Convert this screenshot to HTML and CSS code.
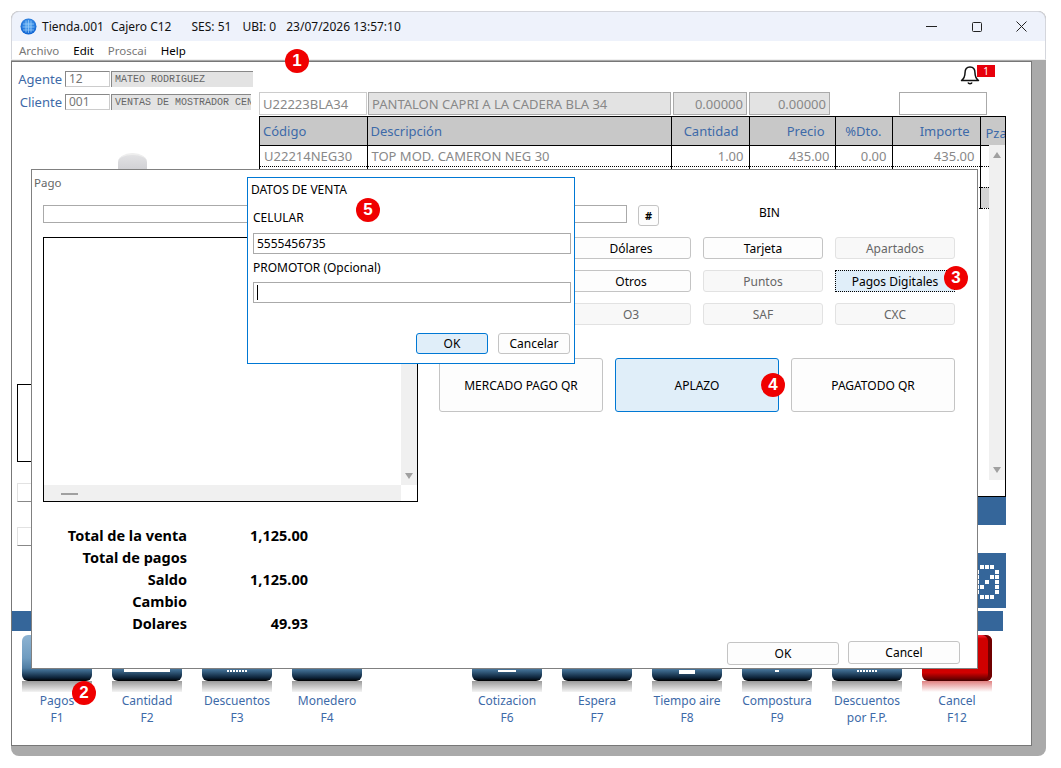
FILE: index.html
```html
<!DOCTYPE html>
<html lang="es">
<head>
    <meta charset="UTF-8">
    <meta name="viewport" content="width=device-width, initial-scale=1.0">
    <title>Tienda.001</title>
    <link rel="stylesheet" href="styles.css">
</head>
<body>
    <div class="window">
        <div class="titlebar">
            <svg class="globe" width="17" height="17" viewBox="0 0 17 17">
                <defs>
                    <radialGradient id="globe-fill" cx="0.5" cy="0.4" r="0.6">
                        <stop offset="0" stop-color="#5fb0f5"/>
                        <stop offset="1" stop-color="#0a5fd0"/>
                    </radialGradient>
                </defs>
                <circle cx="8.5" cy="8.5" r="8" fill="url(#globe-fill)"/>
                <path d="M3 6h11M2.500 9h12M3 12h11M6 2.500v12M8.500 2v13M11 2.500v12" stroke="#9fd0fa" stroke-width="0.7" fill="none"/>
            </svg>
            <span class="title-part">Tienda.001</span>
            <span class="title-part title-cajero">Cajero C12</span>
            <span class="title-part title-ses">SES: 51</span>
            <span class="title-part title-ubi">UBI: 0</span>
            <span class="title-part title-date">23/07/2026 13:57:10</span>
            <div class="win-controls">
                <svg width="11" height="11" viewBox="0 0 11 11"><path d="M0 5.500h11" stroke="#222" fill="none"/></svg>
                <svg width="11" height="11" viewBox="0 0 11 11"><rect x="1.500" y="1.500" width="9" height="9" rx="1" stroke="#222" fill="none"/></svg>
                <svg width="11" height="11" viewBox="0 0 11 11"><path d="M0.500 0.500l10 10M10.500 0.500l-10 10" stroke="#222" fill="none"/></svg>
            </div>
        </div>
        <div class="menubar">
            <span class="menu-off">Archivo</span>
            <span>Edit</span>
            <span class="menu-off">Proscai</span>
            <span>Help</span>
        </div>

        <div class="client">
            <div class="upper">
                <div class="left-col">
                    <div class="agent-row">
                        <label class="agent-label">Agente</label>
                        <div class="field-code">12</div>
                        <div class="field-name">MATEO RODRIGUEZ</div>
                    </div>
                    <div class="agent-row agent-row-second">
                        <label class="agent-label">Cliente</label>
                        <div class="field-code">001</div>
                        <div class="field-name field-name-short">VENTAS DE MOSTRADOR CEN</div>
                    </div>
                    <div class="cylinder"></div>
                    <div class="side-box"></div>
                    <div class="side-input side-input-first"></div>
                    <div class="side-input side-input-second"></div>
                </div>

                <div class="right-col">
                    <div class="bell-row">
                        <div class="bell">
                            <svg width="20" height="21" viewBox="0 0 20 21">
                                <path d="M10 2c-3.500 0-5 2.800-5 6 0 3.500-1 5.500-3.500 7.500h17C16 13.500 15 11.500 15 8c0-3.200-1.500-6-5-6zM8 17.500c.5 1.500 3.500 1.500 4 0" fill="none" stroke="#111" stroke-width="1.500" stroke-linejoin="round"/>
                            </svg>
                            <span class="bell-count">1</span>
                        </div>
                    </div>
                    <div class="product-row">
                        <div class="prod-field prod-code">U22223BLA34</div>
                        <div class="prod-field prod-off prod-desc">PANTALON CAPRI A LA CADERA BLA 34</div>
                        <div class="prod-field prod-off prod-num">0.00000</div>
                        <div class="prod-field prod-off prod-num prod-num-wide">0.00000</div>
                        <div class="prod-field prod-blank"></div>
                    </div>
                    <div class="grid-wrap">
                        <table class="grid">
                            <colgroup>
                                <col class="c-code"><col class="c-desc"><col class="c-qty"><col class="c-price">
                                <col class="c-disc"><col class="c-total"><col class="c-pza">
                            </colgroup>
                            <thead>
                                <tr>
                                    <th class="left">Código</th>
                                    <th class="left">Descripción</th>
                                    <th>Cantidad</th>
                                    <th>Precio</th>
                                    <th>%Dto.</th>
                                    <th>Importe</th>
                                    <th class="left pza">Pza</th>
                                </tr>
                            </thead>
                            <tbody>
                                <tr>
                                    <td class="left">U22214NEG30</td>
                                    <td class="left">TOP MOD. CAMERON NEG 30</td>
                                    <td>1.00</td>
                                    <td>435.00</td>
                                    <td>0.00</td>
                                    <td>435.00</td>
                                    <td class="no-dots"></td>
                                </tr>
                                <tr><td></td><td></td><td></td><td></td><td></td><td></td><td class="short-dots"></td></tr>
                                <tr><td></td><td></td><td></td><td></td><td></td><td></td><td class="row-pick short-dots"></td></tr>
                            </tbody>
                        </table>
                        <div class="vscroll">
                            <span class="arrow-up"></span>
                            <span class="arrow-down"></span>
                        </div>
                    </div>
                    <div class="blue-bar"></div>
                    <div class="blue-display">
                        <svg class="dots" width="25" height="35" viewBox="0 0 25 35" fill="#fff">
                            <rect x="5" y="0" width="4" height="4"/><rect x="10" y="0" width="4" height="4"/><rect x="15" y="0" width="4" height="4"/>
                            <rect x="0" y="5" width="4" height="4"/><rect x="20" y="5" width="4" height="4"/>
                            <rect x="0" y="10" width="4" height="4"/><rect x="15" y="10" width="4" height="4"/><rect x="20" y="10" width="4" height="4"/>
                            <rect x="0" y="15" width="4" height="4"/><rect x="10" y="15" width="4" height="4"/><rect x="20" y="15" width="4" height="4"/>
                            <rect x="0" y="20" width="4" height="4"/><rect x="5" y="20" width="4" height="4"/><rect x="20" y="20" width="4" height="4"/>
                            <rect x="0" y="25" width="4" height="4"/><rect x="20" y="25" width="4" height="4"/>
                            <rect x="5" y="30" width="4" height="4"/><rect x="10" y="30" width="4" height="4"/><rect x="15" y="30" width="4" height="4"/>
                        </svg>
                    </div>
                </div>
            </div>

            <div class="status-bar"></div>

            <div class="keys">
                <div class="key"><div class="cap"></div><div class="shine"></div><div class="key-label">Pagos<br>F1</div></div>
                <div class="key"><div class="cap"><i class="peek peek-bar"></i></div><div class="shine"></div><div class="key-label">Cantidad<br>F2</div></div>
                <div class="key"><div class="cap"><i class="peek peek-dots"></i></div><div class="shine"></div><div class="key-label">Descuentos<br>F3</div></div>
                <div class="key"><div class="cap"></div><div class="shine"></div><div class="key-label">Monedero<br>F4</div></div>
                <div class="key key-empty"></div>
                <div class="key"><div class="cap"><i class="peek peek-small"></i></div><div class="shine"></div><div class="key-label">Cotizacion<br>F6</div></div>
                <div class="key"><div class="cap"></div><div class="shine"></div><div class="key-label">Espera<br>F7</div></div>
                <div class="key"><div class="cap"><i class="peek peek-blob"></i></div><div class="shine"></div><div class="key-label">Tiempo aire<br>F8</div></div>
                <div class="key"><div class="cap"><i class="peek peek-dot"></i></div><div class="shine"></div><div class="key-label">Compostura<br>F9</div></div>
                <div class="key"><div class="cap"><i class="peek peek-dots"></i></div><div class="shine"></div><div class="key-label">Descuentos<br>por F.P.</div></div>
                <div class="key key-red"><div class="cap"></div><div class="shine"></div><div class="key-label">Cancel<br>F12</div></div>
            </div>

            <div class="pago">
                <div class="pago-title">Pago</div>
                <div class="pago-search">
                    <div class="search-input"></div>
                    <button class="btn btn-hash">#</button>
                    <span class="bin">BIN</span>
                </div>
                <div class="pago-body">
                    <div class="pago-left">
                        <div class="listbox">
                            <div class="list-v"><span class="arrow-down"></span></div>
                            <div class="list-h"><span class="list-thumb"></span></div>
                        </div>
                        <div class="totals">
                            <span>Total de la venta</span><span>1,125.00</span>
                            <span>Total de pagos</span><span></span>
                            <span>Saldo</span><span>1,125.00</span>
                            <span>Cambio</span><span></span>
                            <span>Dolares</span><span>49.93</span>
                        </div>
                    </div>
                    <div class="pago-right">
                        <div class="methods">
                            <button class="btn"></button>
                            <button class="btn">Dólares</button>
                            <button class="btn">Tarjeta</button>
                            <button class="btn btn-off">Apartados</button>
                            <button class="btn"></button>
                            <button class="btn">Otros</button>
                            <button class="btn btn-off">Puntos</button>
                            <button class="btn btn-focus">Pagos Digitales</button>
                            <button class="btn btn-off"></button>
                            <button class="btn btn-off">O3</button>
                            <button class="btn btn-off">SAF</button>
                            <button class="btn btn-off">CXC</button>
                        </div>
                        <div class="providers">
                            <button class="btn btn-big">MERCADO PAGO QR</button>
                            <button class="btn btn-big btn-active">APLAZO</button>
                            <button class="btn btn-big">PAGATODO QR</button>
                        </div>
                    </div>
                </div>
                <div class="pago-footer">
                    <button class="btn btn-foot btn-foot-ok">OK</button>
                    <button class="btn btn-foot">Cancel</button>
                </div>
            </div>

            <div class="datos">
                <div class="datos-title">DATOS DE VENTA</div>
                <div class="datos-label datos-label-cel">CELULAR</div>
                <div class="datos-input">5555456735</div>
                <div class="datos-label datos-label-promo">PROMOTOR (Opcional)</div>
                <div class="datos-input"><span class="caret"></span></div>
                <div class="datos-footer">
                    <button class="btn btn-dlg btn-active">OK</button>
                    <button class="btn btn-dlg">Cancelar</button>
                </div>
            </div>

            <span class="callout callout-1">1</span>
            <span class="callout callout-2">2</span>
            <span class="callout callout-3">3</span>
            <span class="callout callout-4">4</span>
            <span class="callout callout-5">5</span>
        </div>
    </div>
</body>
</html>
```

FILE: styles.css
```css
* {
    box-sizing: border-box;
}

body {
    margin: 0;
    padding: 11px 15px 0 11px;
    background-color: #fff;
    font-family: "Noto Sans", Arial, sans-serif;
    font-size: 12px;
    color: #000;
}

.window {
    width: 1035px;
    height: 745px;
    background-color: #aaa;
    border-radius: 8px;
    overflow: hidden;
}

/* title bar */
.titlebar {
    height: 30px;
    display: flex;
    align-items: center;
    padding-left: 8px;
    background-color: #eef2fb;
    border: 1px solid #d4d6dc;
    border-bottom: none;
    border-radius: 8px 8px 0 0;
    font-size: 12px;
    color: #111;
}

.globe {
    margin-right: 5px;
}

.title-cajero {
    margin-left: 7px;
}

.title-ses {
    margin-left: 20px;
}

.title-ubi {
    margin-left: 11px;
}

.title-date {
    margin-left: 10px;
}

.win-controls {
    margin-left: auto;
    display: flex;
    gap: 34px;
    padding-right: 18px;
}

.menubar {
    height: 19px;
    display: flex;
    align-items: center;
    gap: 14px;
    padding-left: 7px;
    background-color: #fff;
    border-left: 1px solid #d4d6dc;
    border-right: 1px solid #d4d6dc;
    border-bottom: 1px solid #f0f0f0;
    font-size: 11.500px;
}

.menu-off {
    color: #777;
}

/* main form */
.client {
    position: relative;
    width: 1021px;
    height: 685px;
    margin-top: 1px;
    background-color: #fff;
    border: 1px solid #777;
}

.upper {
    display: flex;
    height: 549px;
}

.left-col {
    width: 247px;
    padding-top: 9px;
}

.agent-row {
    display: flex;
    align-items: center;
    height: 16px;
}

.agent-row-second {
    margin-top: 7px;
}

.agent-label {
    width: 50px;
    text-align: right;
    margin-right: 3px;
    font-size: 13px;
    color: #3d6aa8;
}

.field-code {
    width: 45px;
    height: 16px;
    padding-left: 3px;
    border: 1px solid #ccc;
    border-top-color: #888;
    border-left-color: #888;
    font-size: 12px;
    line-height: 14px;
    color: #777;
}

.field-name {
    width: 142px;
    height: 16px;
    margin-left: 1px;
    padding-left: 3px;
    overflow: hidden;
    white-space: nowrap;
    background-color: #e3e3e3;
    border-top: 1px solid #888;
    border-left: 1px solid #888;
    font-family: "Liberation Mono", monospace;
    font-size: 10px;
    line-height: 15px;
    color: #666;
}

.field-name-short {
    width: 140px;
}

.cylinder {
    width: 29px;
    height: 18px;
    margin: 43px 0 0 106px;
    background: linear-gradient(#e2e2e4, #cfcfd3);
    border-radius: 14px 14px 0 0 / 9px 9px 0 0;
    border-top: 2px solid #eee;
}

.side-box {
    width: 200px;
    height: 78px;
    margin: 213px 0 0 5px;
    border: 1px solid #000;
}

.side-input {
    width: 200px;
    height: 19px;
    margin-left: 5px;
    border: 1px solid #e2e2e2;
    border-bottom: 1px solid #888;
}

.side-input-first {
    margin-top: 21px;
}

.side-input-second {
    margin-top: 25px;
}

.right-col {
    width: 747px;
}

.bell-row {
    height: 30px;
    padding: 3px 0 0 701px;
}

.bell {
    position: relative;
    width: 20px;
}

.bell-count {
    position: absolute;
    left: 17px;
    top: 0;
    width: 18px;
    height: 12px;
    background-color: #e8000b;
    color: #fff;
    font-size: 10px;
    line-height: 12px;
    text-align: center;
}

.product-row {
    display: flex;
    height: 23px;
}

.prod-field {
    height: 23px;
    padding: 0 3px;
    border: 1px solid #aaa;
    font-size: 13px;
    line-height: 23px;
    color: #888;
    white-space: nowrap;
}

.prod-code {
    width: 108px;
    border-color: #ccc;
}

.prod-off {
    background-color: #e3e3e3;
}

.prod-desc {
    width: 303px;
    margin-left: 1px;
}

.prod-num {
    width: 74px;
    margin-left: 2px;
    text-align: right;
}

.prod-num-wide {
    width: 81px;
}

.prod-blank {
    width: 88px;
    margin-left: 69px;
}

.grid-wrap {
    position: relative;
    height: 381px;
    margin-top: 1px;
    border: 1px solid #000;
    border-right-width: 1px;
}

.grid {
    width: 745px;
    table-layout: fixed;
    border-collapse: collapse;
}

.c-code { width: 107px; }
.c-desc { width: 304px; }
.c-qty { width: 78px; }
.c-price { width: 86px; }
.c-disc { width: 57px; }
.c-total { width: 88px; }
.c-pza { width: 25px; }

.grid th {
    height: 28px;
    padding: 0 10px 0 3px;
    background-color: #c8c8c8;
    border-left: 1px solid #000;
    border-bottom: 1px solid #000;
    font-size: 13px;
    font-weight: normal;
    text-align: right;
    color: #3d6aa8;
}

.grid th:first-child,
.grid td:first-child {
    border-left: none;
}

.grid td {
    height: 21px;
    padding: 0 5px 0 4px;
    border-left: 1px solid #000;
    border-bottom: 1px dotted #000;
    font-size: 13px;
    text-align: right;
    color: #888;
}

.grid .left {
    text-align: left;
}

.grid .pza {
    padding: 4px 0 0 5px;
    overflow: hidden;
    white-space: nowrap;
}

.grid .no-dots {
    border-bottom: 1px dotted #000;
}

.row-pick {
    background-image: linear-gradient(to right, #d4d4d4 9px, #fff 9px);
}

.vscroll {
    position: absolute;
    right: 0;
    top: 28px;
    width: 16px;
    height: 335px;
    display: flex;
    flex-direction: column;
    justify-content: space-between;
    align-items: center;
    padding: 7px 0;
    background-color: #f0f0f0;
}

.arrow-up {
    width: 0;
    height: 0;
    border-left: 4px solid transparent;
    border-right: 4px solid transparent;
    border-bottom: 6px solid #a0a0a0;
}

.arrow-down {
    width: 0;
    height: 0;
    border-left: 4px solid transparent;
    border-right: 4px solid transparent;
    border-top: 6px solid #a0a0a0;
}

.blue-bar {
    height: 28px;
    background-color: #35669a;
}

.blue-display {
    width: 747px;
    height: 55px;
    margin-top: 28px;
    padding: 12px 0 0 716px;
    background-color: #35669a;
}

.dots {
    display: block;
}

.status-bar {
    width: 991px;
    height: 20px;
    margin-top: 0;
    background-color: #35669a;
}

/* function keys */
.keys {
    display: flex;
    gap: 20px;
    padding: 4px 0 0 10px;
}

.key {
    width: 70px;
}

.cap {
    height: 46px;
    display: flex;
    justify-content: center;
    align-items: flex-end;
    padding-bottom: 9px;
    border-radius: 6px;
    background: linear-gradient(#8db3d2 0, #6f9cc0 50%, #4f7da3 72%, #3a6588 78%, #0c2238 93%, #000 100%);
}

.shine {
    height: 11px;
    background: linear-gradient(#9a9a9a, #f4f4f4);
}

.key-label {
    width: 90px;
    margin-left: -10px;
    font-size: 12px;
    line-height: 17px;
    text-align: center;
    color: #3d6aa8;
}

.key-red .cap {
    background: linear-gradient(#ff3040 0, #d00000 8%, #d00000 82%, #700000 95%, #400000 100%);
    box-shadow: inset -4px 0 0 #700000;
}

.key-red .shine {
    background: linear-gradient(#e08080, #fff);
}

.peek {
    display: block;
    background-color: #fff;
}

.peek-bar {
    width: 46px;
    height: 3px;
}

.peek-small {
    width: 18px;
    height: 2px;
}

.peek-blob {
    width: 16px;
    height: 4px;
    margin-bottom: -2px;
}

.peek-dot {
    width: 4px;
    height: 2px;
}

.peek-dots {
    width: 20px;
    height: 2px;
    background: repeating-linear-gradient(to right, #fff 0 2px, transparent 2px 3px);
}

/* pago dialog */
.pago {
    position: absolute;
    left: 19px;
    top: 107px;
    width: 947px;
    height: 500px;
    display: flex;
    flex-direction: column;
    background-color: #fff;
    border: 1px solid #808080;
}

.pago-title {
    padding: 5px 0 0 2px;
    height: 35px;
    font-size: 11.500px;
    color: #666;
}

.pago-search {
    display: flex;
    align-items: flex-start;
    padding-left: 11px;
}

.search-input {
    width: 584px;
    height: 18px;
    border: 1px solid #aaa;
}

.btn {
    display: block;
    padding: 0;
    background-color: #fdfdfd;
    border: 1px solid #c4c4c4;
    border-radius: 3px;
    font-family: "Noto Sans", Arial, sans-serif;
    font-size: 12px;
    color: #000;
}

.btn-hash {
    width: 21px;
    height: 21px;
    margin-left: 11px;
    font-weight: bold;
    font-size: 11px;
}

.bin {
    margin: -1px 0 0 100px;
    line-height: 17px;
}

.pago-body {
    display: flex;
    margin-top: 11px;
}

.pago-left {
    width: 375px;
    margin-left: 11px;
}

.listbox {
    position: relative;
    height: 265px;
    border: 1px solid #000;
}

.list-v {
    position: absolute;
    right: 0;
    top: 0;
    width: 16px;
    height: 247px;
    display: flex;
    justify-content: center;
    align-items: flex-end;
    padding-bottom: 6px;
    background-color: #f0f0f0;
}

.list-h {
    position: absolute;
    left: 0;
    bottom: 0;
    width: 357px;
    height: 16px;
    padding: 8px 0 0 17px;
    background-color: #f0f0f0;
}

.list-thumb {
    display: block;
    width: 17px;
    height: 2px;
    background-color: #a0a0a0;
}

.totals {
    display: grid;
    grid-template-columns: 144px 121px;
    grid-auto-rows: 22px;
    margin-top: 22px;
    font-size: 14.500px;
    font-weight: bold;
    line-height: 22px;
    text-align: right;
}

.pago-right {
    margin-left: 21px;
}

.methods {
    display: grid;
    grid-template-columns: repeat(4, 120px);
    grid-auto-rows: 22px;
    gap: 11px 12px;
}

.btn-off {
    background-color: #f8f8f8;
    border-color: #e2e2e2;
    color: #666;
}

.btn-focus {
    background-color: #e0eef9;
    border: 1px dotted #000;
    border-radius: 0;
}

.providers {
    display: grid;
    grid-template-columns: repeat(3, 164px);
    gap: 12px;
    margin-top: 33px;
}

.btn-big {
    height: 54px;
}

.btn-active {
    background-color: #e0eef9;
    border-color: #0078d4;
}

.pago-footer {
    display: flex;
    justify-content: flex-end;
    gap: 9px;
    margin-top: auto;
    padding: 0 17px 3px 0;
}

.btn-foot {
    width: 112px;
    height: 23px;
}

.btn-foot-ok {
    margin-top: 1px;
}

/* datos de venta dialog */
.datos {
    position: absolute;
    left: 235px;
    top: 115px;
    width: 328px;
    height: 187px;
    padding: 3px 3px 0 5px;
    background-color: #fff;
    border: 1px solid #0078d4;
}

.datos-title {
    margin-left: -2px;
    line-height: 17px;
}

.datos-label {
    line-height: 17px;
}

.datos-label-cel {
    margin-top: 11px;
}

.datos-label-promo {
    margin-top: 5px;
}

.datos-input {
    width: 318px;
    height: 21px;
    margin-top: 7px;
    padding-left: 3px;
    border: 1px solid #aaa;
    line-height: 20px;
}

.datos-label-promo + .datos-input {
    margin-top: 6px;
}

.caret {
    display: block;
    width: 1px;
    height: 15px;
    margin-top: 2px;
    background-color: #000;
}

.datos-footer {
    display: flex;
    justify-content: flex-end;
    gap: 10px;
    margin: 30px 1px 0 0;
}

.btn-dlg {
    width: 72px;
    height: 21px;
}

/* numbered callouts */
.callout {
    position: absolute;
    width: 24px;
    height: 24px;
    background-color: #f00000;
    border-radius: 50%;
    color: #fff;
    font-family: "Liberation Sans", Arial, sans-serif;
    font-size: 17px;
    font-weight: bold;
    line-height: 24px;
    text-align: center;
}

.callout-1 { left: 273px; top: -13px; }
.callout-2 { left: 60px; top: 619px; }
.callout-3 { left: 932px; top: 204px; }
.callout-4 { left: 749px; top: 311px; }
.callout-5 { left: 344px; top: 136px; }
```
